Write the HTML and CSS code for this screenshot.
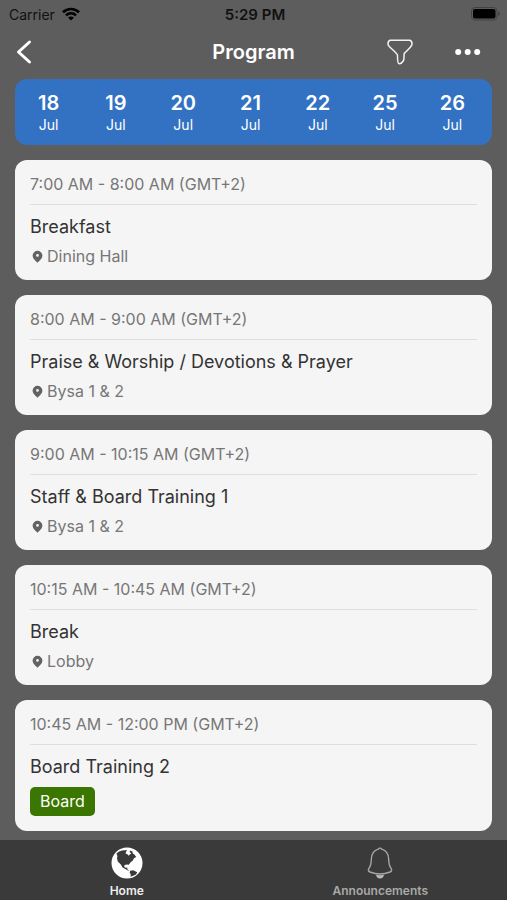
FILE: index.html
```html
<!DOCTYPE html>
<html lang="en">
<head>
<meta charset="utf-8">
<meta name="viewport" content="width=device-width, initial-scale=1">
<title>Program</title>
<link rel="stylesheet" href="styles.css">
</head>
<body>
<div class="app">
  <div class="status">
    <div class="carrier">Carrier
      <svg width="18" height="14" viewBox="0 0 18 14" aria-hidden="true">
        <g fill="none" stroke="#000" stroke-width="2.6"><path d="M1 5.2A11.5 11.5 0 0 1 17 5.2"/><path d="M4 8.4A7 7 0 0 1 14 8.4"/></g>
        <path d="M9 13.6 6.1 10.7A4 4 0 0 1 11.9 10.7Z"/>
      </svg>
    </div>
    <div class="clock">5:29 PM</div>
    <div class="battery">
      <svg width="30" height="14" viewBox="0 0 30 14" aria-hidden="true">
        <rect x=".5" y=".5" width="25.5" height="12.5" rx="3.5" fill="none" stroke="#434343"/>
        <rect x="2" y="2" width="22.5" height="9.5" rx="2"/>
        <path d="M27.5 4.5Q30 6.7 27.5 9Z" fill="#353535"/>
      </svg>
    </div>
  </div>
  <header class="header">
    <button class="icon-button back" aria-label="Back">
      <svg width="16" height="26" viewBox="0 0 16 26" aria-hidden="true"><path d="M13.5 3 2.5 13 13.5 23" fill="none" stroke="#fff" stroke-width="3" stroke-linecap="round" stroke-linejoin="round"/></svg>
    </button>
    <h1 class="title">Program</h1>
    <div class="actions">
      <button class="icon-button" aria-label="Filter">
        <svg width="26" height="26" viewBox="0 0 26 26" aria-hidden="true"><path d="M3.2 1.2H22.8Q25.6 2 24.8 6.2C23 9.6 19.5 11.7 17.2 14.5C16.7 16.8 17.6 20 16.2 22Q14 25.3 11.9 24.6Q10.4 24 10.5 16.2C9 12.7 3.4 9.5 1.2 6.2Q.4 2 3.2 1.2Z" fill="none" stroke="#f2f2f2" stroke-width="1.5" stroke-linejoin="round"/></svg>
      </button>
      <button class="icon-button" aria-label="More options">
        <svg width="26" height="26" viewBox="0 0 26 26" fill="#fff" aria-hidden="true"><circle cx="3.2" cy="13" r="3"/><circle cx="12.7" cy="13" r="3"/><circle cx="22.2" cy="13" r="3"/></svg>
      </button>
    </div>
  </header>
  <main class="content">
    <nav class="dates" aria-label="Days">
      <button class="date"><b>18</b><span>Jul</span></button>
      <button class="date"><b>19</b><span>Jul</span></button>
      <button class="date"><b>20</b><span>Jul</span></button>
      <button class="date"><b>21</b><span>Jul</span></button>
      <button class="date"><b>22</b><span>Jul</span></button>
      <button class="date"><b>25</b><span>Jul</span></button>
      <button class="date"><b>26</b><span>Jul</span></button>
    </nav>
    <article class="card">
      <p class="time">7:00 AM - 8:00 AM (GMT+2)</p>
      <h2 class="name">Breakfast</h2>
      <p class="place"><svg class="pin" viewBox="0 0 11 13" aria-hidden="true"><path fill-rule="evenodd" d="M5.5.8A4.9 4.9 0 0 1 10.4 5.5C10.4 8.6 7.3 10.8 5.5 12.7C3.7 10.8.6 8.6.6 5.5A4.9 4.9 0 0 1 5.5.8ZM5.5 4A1.4 1.4 0 1 0 5.5 6.8A1.4 1.4 0 1 0 5.5 4Z"/></svg>Dining Hall</p>
    </article>
    <article class="card">
      <p class="time">8:00 AM - 9:00 AM (GMT+2)</p>
      <h2 class="name">Praise &amp; Worship / Devotions &amp; Prayer</h2>
      <p class="place"><svg class="pin" viewBox="0 0 11 13" aria-hidden="true"><path fill-rule="evenodd" d="M5.5.8A4.9 4.9 0 0 1 10.4 5.5C10.4 8.6 7.3 10.8 5.5 12.7C3.7 10.8.6 8.6.6 5.5A4.9 4.9 0 0 1 5.5.8ZM5.5 4A1.4 1.4 0 1 0 5.5 6.8A1.4 1.4 0 1 0 5.5 4Z"/></svg>Bysa 1 &amp; 2</p>
    </article>
    <article class="card">
      <p class="time">9:00 AM - 10:15 AM (GMT+2)</p>
      <h2 class="name">Staff &amp; Board Training 1</h2>
      <p class="place"><svg class="pin" viewBox="0 0 11 13" aria-hidden="true"><path fill-rule="evenodd" d="M5.5.8A4.9 4.9 0 0 1 10.4 5.5C10.4 8.6 7.3 10.8 5.5 12.7C3.7 10.8.6 8.6.6 5.5A4.9 4.9 0 0 1 5.5.8ZM5.5 4A1.4 1.4 0 1 0 5.5 6.8A1.4 1.4 0 1 0 5.5 4Z"/></svg>Bysa 1 &amp; 2</p>
    </article>
    <article class="card">
      <p class="time">10:15 AM - 10:45 AM (GMT+2)</p>
      <h2 class="name">Break</h2>
      <p class="place"><svg class="pin" viewBox="0 0 11 13" aria-hidden="true"><path fill-rule="evenodd" d="M5.5.8A4.9 4.9 0 0 1 10.4 5.5C10.4 8.6 7.3 10.8 5.5 12.7C3.7 10.8.6 8.6.6 5.5A4.9 4.9 0 0 1 5.5.8ZM5.5 4A1.4 1.4 0 1 0 5.5 6.8A1.4 1.4 0 1 0 5.5 4Z"/></svg>Lobby</p>
    </article>
    <article class="card">
      <p class="time">10:45 AM - 12:00 PM (GMT+2)</p>
      <h2 class="name">Board Training 2</h2>
      <p class="tag">Board</p>
    </article>
  </main>
  <nav class="tabs" aria-label="Main">
    <a class="tab active" href="#home" aria-current="page">
      <svg width="32" height="32" viewBox="0 0 32 32" aria-hidden="true">
        <circle cx="16" cy="16" r="15.5" fill="#fff"/>
        <path fill="#3a3a3a" d="M5.4 6.4 8 4.4 11 3.4 16 3 15 5 14.6 6.6 16.8 7.4 17.6 8.8 18.8 7.6 20.2 6.6 18.6 4.8 19 3.4 21.4 4.6 21.8 6.6 23.4 7.6 25.2 10 23 11.2 21.8 13.4 19.4 15.6 17.8 17.8 16 17.4 13.6 18 13.2 19.8 14.6 20.8 16.2 20.4 16.4 22.4 18.6 23.6 16.8 23.6 14 21.8 11.6 20.6 9.8 17.4 6.8 14.6 6 11.4 6.4 9Z"/>
        <path fill="#3a3a3a" d="M19.2 23.8 22.2 23.2 26.2 25.2 25 27.4 22.2 28.8 19.4 29.8 19.8 27.4 18.6 25.6Z"/>
      </svg>
      <span>Home</span>
    </a>
    <a class="tab" href="#announcements">
      <svg width="32" height="32" viewBox="0 0 32 32" aria-hidden="true">
        <path d="M14.2 2.2Q16 .1 17.8 2.2C22.2 3.6 24.4 7 24.6 11.8C24.8 17 25 19 27 21.2Q28.6 23.8 26 25C20 27.4 12 27.4 6 25Q3.4 23.8 5 21.2C7 19 7.2 17 7.4 11.8C7.6 7 9.8 3.6 14.2 2.2Z" fill="none" stroke="#a6a6a6" stroke-width="1.4"/>
        <path d="M12 27.8Q16 28.7 20 27.8Q19.5 31.4 16 31.4Q12.5 31.4 12 27.8Z" fill="#b8b8b8"/>
      </svg>
      <span>Announcements</span>
    </a>
  </nav>
</div>
</body>
</html>
```
FILE: styles.css
```css
* { box-sizing: border-box; }
body {
  margin: 0;
  background: #5d5d5d;
  font-family: Inter, "Liberation Sans", sans-serif;
  color: #333;
}
h1, h2, p { margin: 0; }
button {
  padding: 0;
  border: 0;
  background: none;
  color: inherit;
  font: inherit;
}
svg { display: block; }
.app {
  min-height: 100vh;
  display: flex;
  flex-direction: column;
}
.status {
  display: grid;
  grid-template-columns: 1fr auto 1fr;
  align-items: center;
  height: 28px;
  padding: 0 6px 0 9px;
  font-size: 14px;
  color: #111;
}
.carrier { display: flex; align-items: center; gap: 7px; }
.clock { font-size: 15px; font-weight: 600; }
.battery { display: flex; justify-content: flex-end; }
.header {
  display: grid;
  grid-template-columns: 1fr auto 1fr;
  align-items: center;
  height: 51px;
  padding: 0 16px 4px;
  color: #fff;
}
.back { justify-self: start; }
.title { font-size: 20px; font-weight: 600; line-height: 24px; }
.actions {
  display: flex;
  justify-content: flex-end;
  gap: 42px;
  padding-right: 10px;
}
.content {
  flex: 1;
  display: flex;
  flex-direction: column;
  gap: 15px;
  padding: 0 15px 9px;
}
.dates {
  display: grid;
  grid-template-columns: repeat(7, 1fr);
  height: 66px;
  padding: 2px 6px 0 0;
  border-radius: 12px;
  background: #3372c2;
  color: #fff;
}
.date {
  display: flex;
  flex-direction: column;
  align-items: center;
  justify-content: center;
  font-size: 14px;
  line-height: 20px;
}
.date b { font-size: 20px; font-weight: 600; line-height: 24px; }
.card {
  padding: 10px 15px 9px;
  border-radius: 12px;
  background: #f5f5f5;
}
.time {
  padding-bottom: 5px;
  border-bottom: 1px solid #dedede;
  margin-bottom: 7px;
  font-size: 16px;
  line-height: 29px;
  color: #777;
}
.name { font-size: 18px; font-weight: 400; line-height: 30px; }
.place {
  display: flex;
  align-items: center;
  gap: 4px;
  font-size: 16px;
  line-height: 29px;
  color: #777;
}
.pin { width: 11px; height: 13px; margin-left: 2px; fill: #626262; }
.tag {
  width: fit-content;
  margin: 5px 0 6px;
  padding: 0 10px;
  border-radius: 5px;
  background: #3b7600;
  color: #fff;
  font-size: 16px;
  line-height: 29px;
}
.tabs {
  position: sticky;
  bottom: 0;
  display: grid;
  grid-template-columns: 1fr 1fr;
  height: 60px;
  background: #3a3a3a;
}
.tab {
  display: flex;
  flex-direction: column;
  align-items: center;
  gap: 4px;
  padding-top: 7px;
  color: #a9a9a9;
  font-size: 12px;
  font-weight: 600;
  line-height: 16px;
  text-decoration: none;
}
.tab.active { color: #eee; }
```
